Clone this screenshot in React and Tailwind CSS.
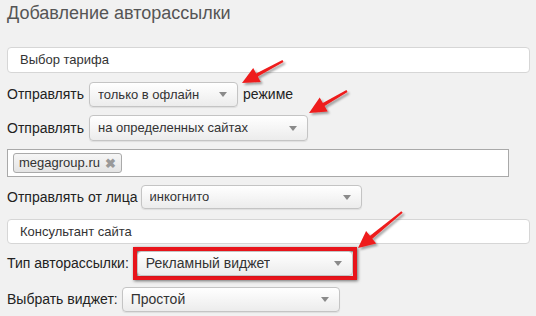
import React from 'react';

// Pointer arrows drawn over the form
const arrows = [
  { tail: [283, 61], tip: [242, 83] },
  { tail: [347, 91], tip: [309, 113] },
  { tail: [402, 212], tip: [358, 248] },
];

const arrowPoints = ({ tail, tip }) => {
  const dx = tip[0] - tail[0];
  const dy = tip[1] - tail[1];
  const len = Math.hypot(dx, dy);
  const ux = dx / len;
  const uy = dy / len;
  const nx = -uy;
  const ny = ux;
  const head = 17;
  const hw = 8;
  const sw = 1.8;
  const bx = tip[0] - ux * head;
  const by = tip[1] - uy * head;
  const pts = [
    [tail[0] + nx * sw * 0.6, tail[1] + ny * sw * 0.6],
    [bx + nx * sw, by + ny * sw],
    [bx + nx * hw, by + ny * hw],
    tip,
    [bx - nx * hw, by - ny * hw],
    [bx - nx * sw, by - ny * sw],
    [tail[0] - nx * sw * 0.6, tail[1] - ny * sw * 0.6],
  ];
  return pts.map((p) => p.join(',')).join(' ');
};

const Caret = () => (
  <svg width="8" height="5" viewBox="0 0 8 5" className="shrink-0">
    <path d="M0 0 L8 0 L4 5 Z" fill="#8a8a8a" />
  </svg>
);

const Select = ({ value, className = '', textClass = 'text-[13px]' }) => (
  <div
    className={`flex items-center justify-between pl-[8px] pr-[10px] border border-[#c4c4c4] rounded-[4px] bg-gradient-to-b from-white to-[#ececec] shadow-[0_1px_1px_rgba(0,0,0,0.08)] text-[#333] ${textClass} ${className}`}
  >
    <span className="truncate">{value}</span>
    <Caret />
  </div>
);

const TextInput = ({ value, className = '' }) => (
  <div
    className={`flex items-center pl-[12px] border border-[#d6d6d6] rounded-[4px] bg-white text-[13px] text-[#333] ${className}`}
  >
    {value}
  </div>
);

export default function App() {
  return (
    <div
      className="relative w-[536px] h-[316px] overflow-hidden bg-[#f1f1f1] pl-[7px] text-[#222]"
      style={{ fontFamily: '"Liberation Sans", Arial, sans-serif' }}
    >
      {/* Title */}
      <h1 className="mt-[2px] text-[18px] leading-[22px] text-[#555]">Добавление авторассылки</h1>

      {/* Tariff */}
      <TextInput value="Выбор тарифа" className="mt-[23px] w-[523px] h-[26px]" />

      {/* Send mode */}
      <div className="mt-[9px] flex items-center h-[25px] text-[14px]">
        <span>Отправлять</span>
        <Select value="только в офлайн" className="ml-[5px] w-[149px] h-[25px]" />
        <span className="ml-[5px]">режиме</span>
      </div>

      {/* Send where */}
      <div className="mt-[8px] flex items-center h-[26px] text-[14px]">
        <span>Отправлять</span>
        <Select value="на определенных сайтах" className="ml-[5px] w-[219px] h-[26px]" />
      </div>

      {/* Sites tags */}
      <div className="mt-[8px] w-[502px] h-[28px] border border-[#a9a9a9] bg-white flex items-center pl-[5px]">
        <div className="flex items-center h-[20px] px-[5px] gap-[5px] border border-[#aaa] rounded-[3px] bg-gradient-to-b from-[#f6f6f6] to-[#e4e4e4] text-[13px] text-[#333]">
          <span>megagroup.ru</span>
          <span className="text-[13px] font-bold text-[#999] leading-none">✖</span>
        </div>
      </div>

      {/* Sender */}
      <div className="mt-[8px] flex items-center h-[24px] text-[14px]">
        <span>Отправлять от лица</span>
        <Select value="инкогнито" className="ml-[3px] w-[221px] h-[24px]" />
      </div>

      {/* Consultant */}
      <TextInput value="Консультант сайта" className="mt-[10px] w-[523px] h-[25px]" />

      {/* Type */}
      <div className="mt-[3px] flex items-center h-[33px] text-[14px]">
        <span>Тип авторассылки:</span>
        <div className="ml-[4px] w-[224px] h-[33px] border-[4px] border-[#e8141b] shadow-[1px_1px_3px_rgba(0,0,0,0.55),inset_1px_1px_2px_rgba(0,0,0,0.55)] flex items-stretch">
          <Select value="Рекламный виджет" textClass="text-[14px]" className="flex-1 rounded-[2px]" />
        </div>
      </div>

      {/* Widget */}
      <div className="mt-[7px] flex items-center h-[24px] text-[14px]">
        <span>Выбрать виджет:</span>
        <Select value="Простой" textClass="text-[14px]" className="ml-[4px] w-[218px] h-[25px]" />
      </div>

      {/* Arrows overlay */}
      <svg className="absolute inset-0 pointer-events-none" width="536" height="316">
        <defs>
          <filter id="sh" x="-20%" y="-20%" width="140%" height="140%">
            <feDropShadow dx="2" dy="2" stdDeviation="1.2" floodColor="#000" floodOpacity="0.35" />
          </filter>
        </defs>
        {arrows.map((a, i) => (
          <polygon key={i} points={arrowPoints(a)} fill="#ee1c1c" filter="url(#sh)" />
        ))}
      </svg>
    </div>
  );
}
